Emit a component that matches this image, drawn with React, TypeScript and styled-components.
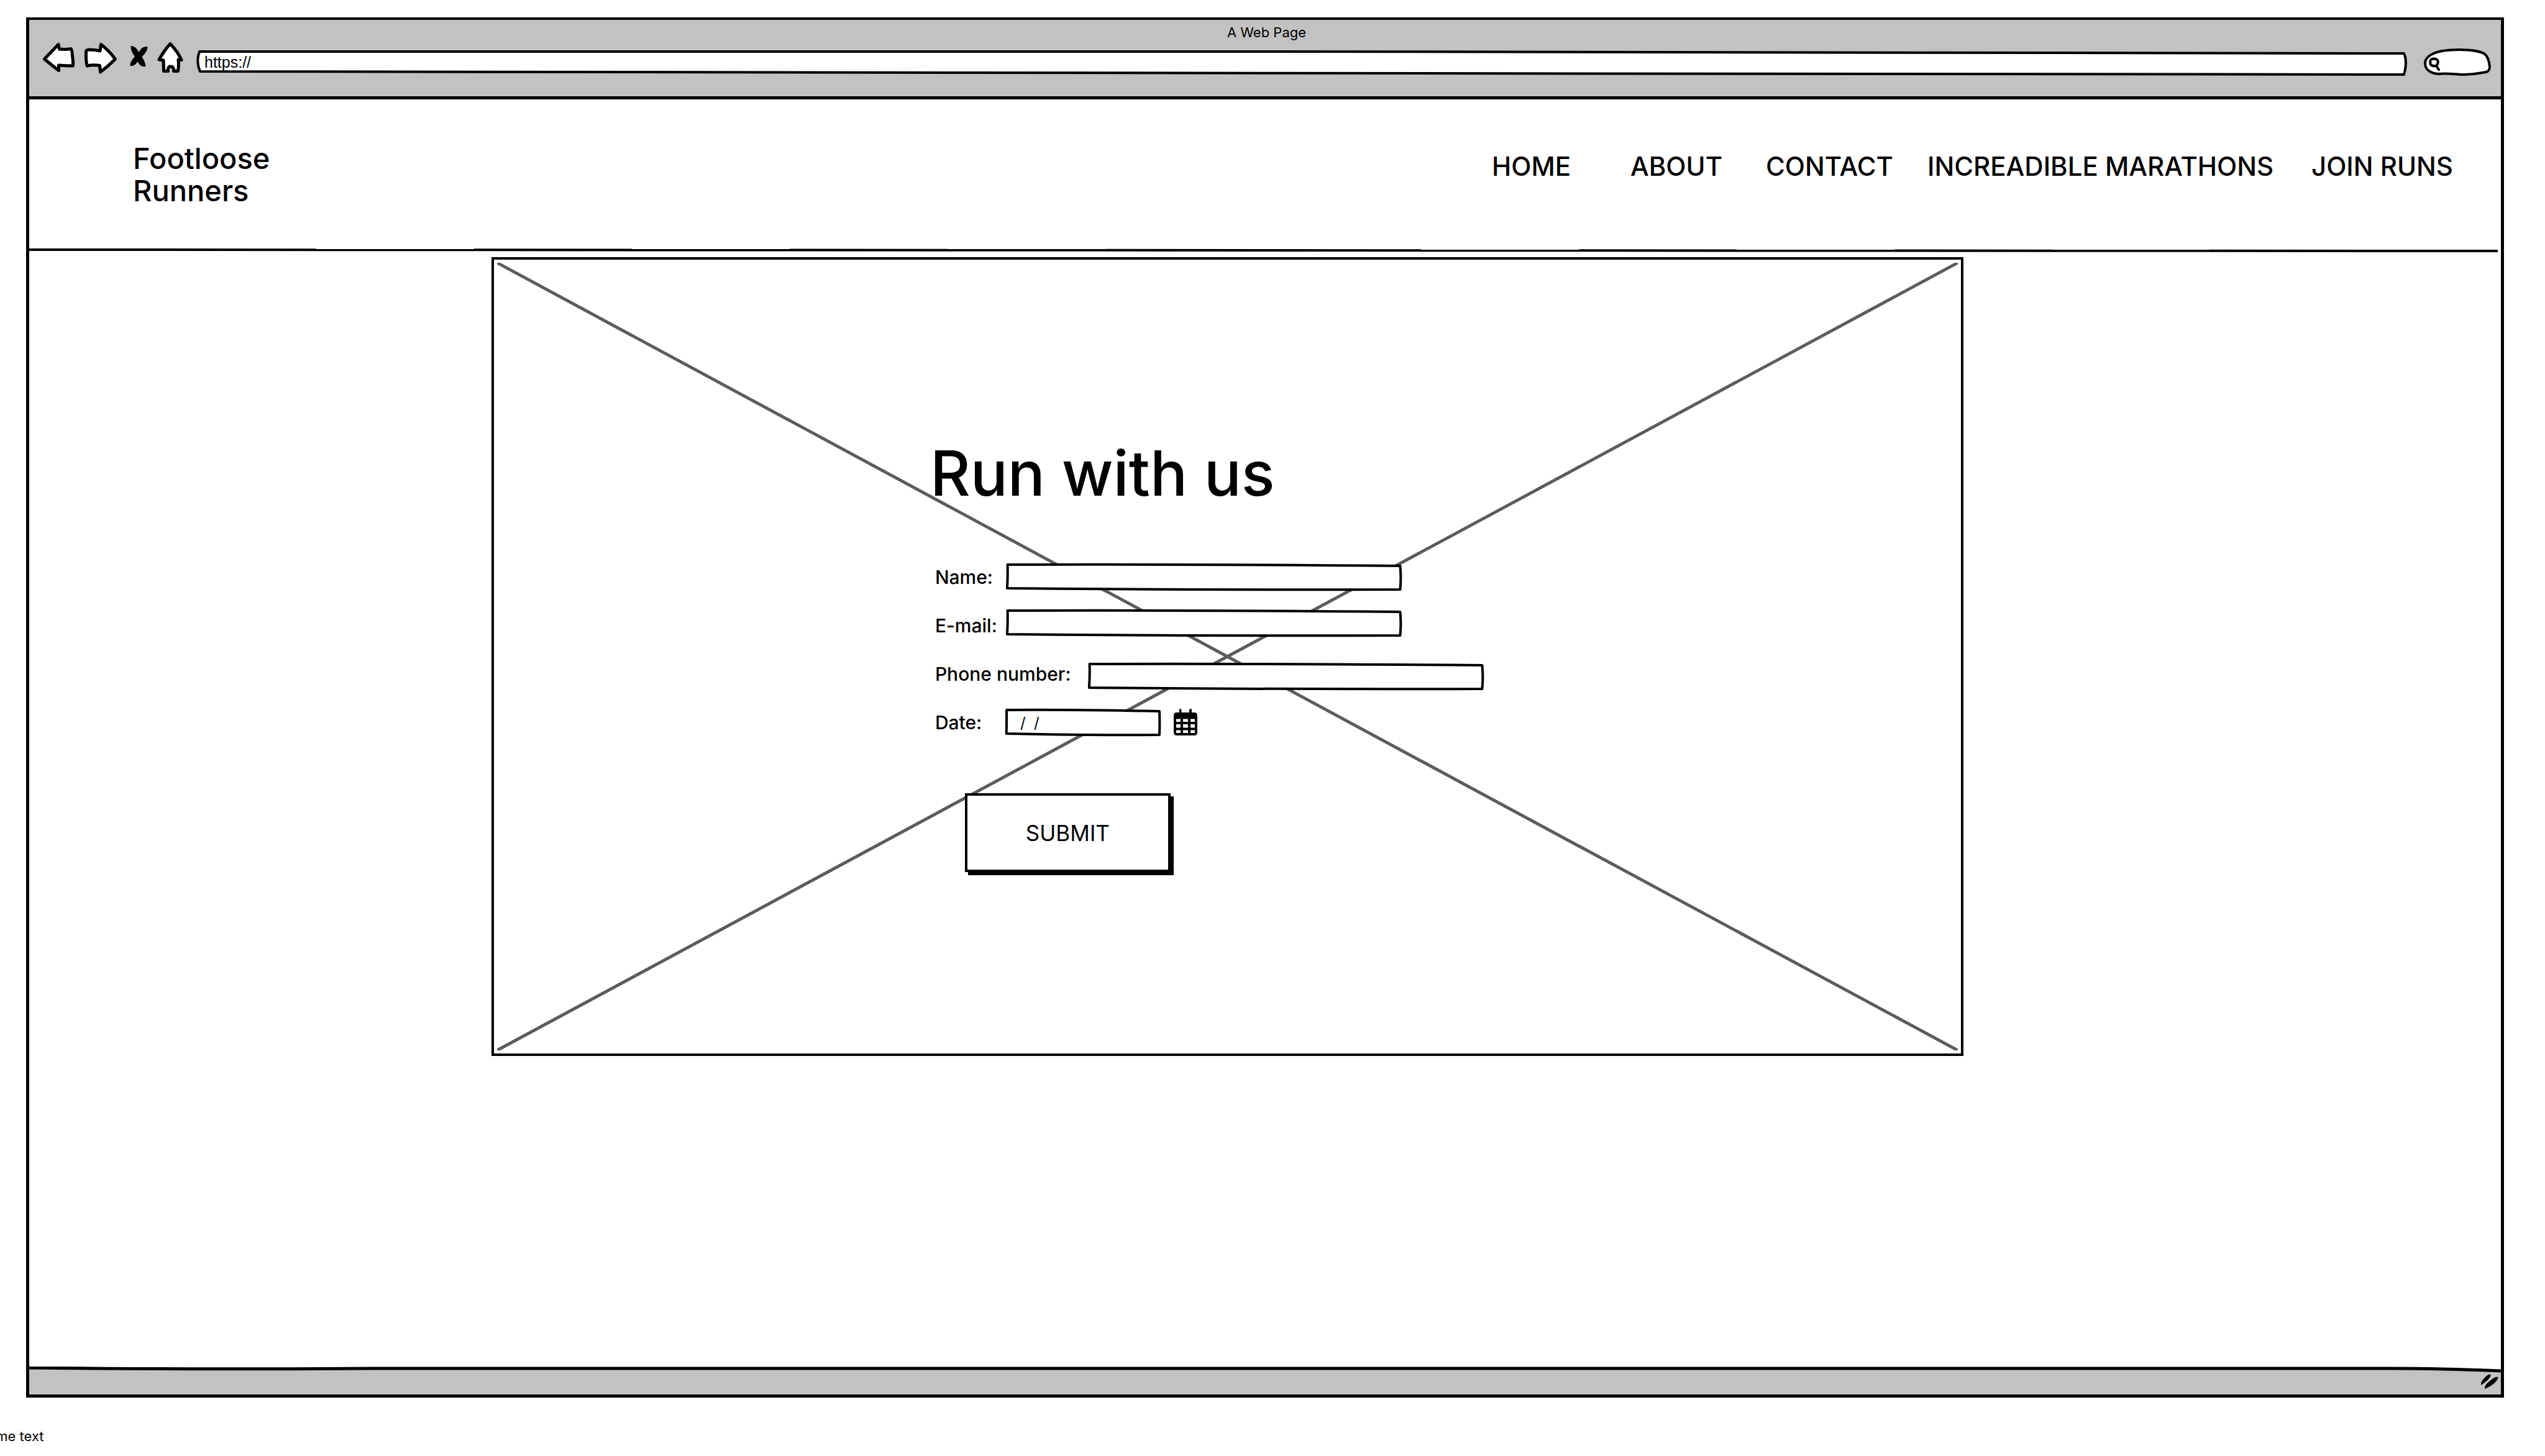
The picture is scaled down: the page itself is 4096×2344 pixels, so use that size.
import React from "react";
import styled, { createGlobalStyle } from "styled-components";

const ink = "#000000";
const chrome = "#c2c2c2";
const crossLine = "#5c5c5e";
const sans = `Inter, "Liberation Sans", sans-serif`;

const GlobalStyle = createGlobalStyle`
  *, *::before, *::after { box-sizing: border-box; }
  body {
    margin: 0;
    background: #ffffff;
    color: ${ink};
    font-family: ${sans};
    overflow-x: hidden;
  }
  button, input { font: inherit; color: inherit; }
`;

const Page = styled.div`
  display: flex;
  flex-direction: column;
  min-height: 100vh;
  padding-top: 28px;
`;

const BrowserFrame = styled.div`
  flex: 1;
  display: flex;
  flex-direction: column;
  margin: 0 66px 0 42px;
  border: solid ${ink};
  border-width: 4px 5px 5px;
`;

const Toolbar = styled.div`
  padding: 6px 16px 33px 21px;
  background: ${chrome};
  border-bottom: 5px solid ${ink};
`;

const WindowTitle = styled.div`
  font-size: 22px;
  line-height: 28px;
  text-align: center;
`;

const ToolbarRow = styled.div`
  display: flex;
  align-items: flex-end;
  gap: 26px;
`;

const HistoryButtons = styled.div`
  display: flex;
  flex: 1;
  align-items: flex-end;
  gap: 14px;
`;

const IconButton = styled.button`
  display: block;
  flex: none;
  padding: 0;
  border: 0;
  background: none;
  cursor: pointer;

  svg { display: block; }
`;

const Sketched = styled.div<{ $width?: string; $height: number; $indent?: number }>`
  position: relative;
  flex: ${p => (p.$width ? "none" : "1")};
  width: ${p => p.$width ?? "auto"};
  height: ${p => p.$height}px;
  margin-left: ${p => p.$indent ?? 0}px;
`;

const Outline = styled.svg`
  position: absolute;
  inset: 0;
  width: 100%;
  height: 100%;
  overflow: visible;

  path {
    fill: #ffffff;
    stroke: ${ink};
    stroke-width: 4px;
    stroke-linejoin: round;
    vector-effect: non-scaling-stroke;
  }
`;

const BareInput = styled.input<{ $size: number; $pad: number }>`
  position: relative;
  display: block;
  width: 100%;
  height: 100%;
  padding: 0 ${p => p.$pad}px;
  border: 0;
  outline: 0;
  background: transparent;
  font-size: ${p => p.$size}px;
`;

const AddressInput = styled(BareInput)`
  padding-bottom: 3px;
  font-family: "Liberation Sans", Arial, sans-serif;
`;

const Magnifier = styled.svg`
  position: absolute;
  left: 8px;
  top: 14px;
`;

const SiteHeader = styled.header`
  display: flex;
  justify-content: space-between;
  align-items: flex-start;
  padding: 69px 69px 65px 167px;
`;

const Brand = styled.div`
  width: min-content;
  font-size: 47px;
  font-weight: 500;
  line-height: 52px;
`;

const Nav = styled.nav`
  display: grid;
  grid-template-columns: 223px 218px 260px 618px 236px;
  padding-top: 13px;
`;

const NavLink = styled.a`
  color: inherit;
  font-size: 42px;
  font-weight: 500;
  line-height: 52px;
  text-decoration: none;
  white-space: nowrap;
`;

const Divider = styled.svg`
  display: block;
  width: calc(100% - 5px);
  height: 8px;
`;

const Hero = styled.section`
  position: relative;
  width: 59.55%;
  aspect-ratio: 2369 / 1286;
  margin: 8px 0 0 18.7%;
  padding: 284px 0 0 702px;
  border: 4px solid ${ink};
`;

const Cross = styled.svg`
  position: absolute;
  inset: 0;
  width: 100%;
  height: 100%;
  padding: 5px;
`;

const HeroTitle = styled.h1`
  position: relative;
  margin: 0 0 85px;
  font-size: 100px;
  font-weight: 500;
  line-height: 120px;
`;

const Form = styled.form`
  position: relative;
  display: flex;
  flex-direction: column;
  gap: 42px;
  padding-left: 8px;
`;

const FieldPair = styled.div`
  display: flex;
  flex-direction: column;
  gap: 30px;
`;

const FieldRow = styled.div<{ $align?: string }>`
  display: flex;
  align-items: ${p => p.$align ?? "center"};
`;

const Label = styled.label<{ $wide?: boolean }>`
  flex: none;
  width: ${p => (p.$wide ? 246 : 114)}px;
  font-size: 30px;
  font-weight: 500;
  line-height: 36px;
  white-space: nowrap;
`;

const CalendarButton = styled(IconButton)`
  margin-left: 22px;
`;

const SubmitButton = styled.button`
  align-self: flex-start;
  width: 331px;
  height: 127px;
  margin: 50px 0 0 48px;
  border: 4px solid ${ink};
  background: #ffffff;
  box-shadow: 5px 5px 0 ${ink};
  font-size: 35px;
  cursor: pointer;
`;

const Main = styled.main`
  flex: 1;
`;

const StatusBar = styled.footer`
  position: relative;
  display: flex;
  justify-content: flex-end;
  align-items: center;
  height: 45px;
  padding: 4px 3px 0 0;
`;

const StatusShape = styled(Outline)`
  overflow: hidden;

  path:first-child { fill: ${chrome}; stroke: none; }
  path:last-child { fill: none; stroke-width: 5px; }
`;

const Grip = styled.svg`
  position: relative;
`;

const Caption = styled.p`
  margin: 0;
  padding: 48px 0 18px;
  font-size: 22px;
  line-height: 28px;
  text-indent: -34px;
  white-space: nowrap;
`;

const arrowStroke = {
  fill: "#ffffff",
  stroke: ink,
  strokeWidth: 5,
  strokeLinejoin: "round" as const,
  strokeLinecap: "round" as const,
};

const links = ["HOME", "ABOUT", "CONTACT", "INCREADIBLE MARATHONS", "JOIN RUNS"];

function FieldBox({ id, type, width, value }: { id: string; type: string; width: string; value?: string }) {
  return (
    <Sketched $width={width} $height={44}>
      <Outline viewBox="0 0 1000 44" preserveAspectRatio="none" aria-hidden="true">
        <path d="M4 2 Q400 1 996 4 Q999 22 996 42 Q500 43 3 40 Q5 20 4 2Z" />
      </Outline>
      <BareInput id={id} name={id} type={type} defaultValue={value} $size={24} $pad={23} />
    </Sketched>
  );
}

export default function App() {
  return (
    <>
      <GlobalStyle />
      <Page>
        <BrowserFrame>
          <Toolbar>
            <WindowTitle>A Web Page</WindowTitle>
            <ToolbarRow>
              <HistoryButtons>
                <IconButton type="button" aria-label="Back">
                  <svg width="53" height="56" viewBox="0 0 53 56">
                    <path {...arrowStroke} d="M3.500 29 L26 5.500 L27.500 13 Q37 14 46 12.500 Q48 13 48.500 24 Q50 32 49.500 40 Q38 40 26.500 39 L26.500 47.500 Q14 38 3.500 29Z" />
                  </svg>
                </IconButton>
                <IconButton type="button" aria-label="Forward">
                  <svg width="54" height="56" viewBox="0 0 54 56">
                    <path {...arrowStroke} d="M3.500 17 Q4 14 9 14 Q18 14 26 16 L27.500 5.500 Q40 15 50.500 29 Q39 41 26.500 50 L25.500 39.500 Q15 38 5 40 Q3 30 3.500 17Z" />
                  </svg>
                </IconButton>
                <IconButton type="button" aria-label="Stop">
                  <svg width="36" height="56" viewBox="0 0 36 56">
                    <path fill={ink} d="M7.500 8 Q15 7 20.500 18 Q25 8 34.500 9 Q35 16 25.500 25.500 Q31 34 31.500 41 Q23 43 18.500 33 Q14 41 6.500 40 Q6 33 14 25 Q7 16 7.500 8Z" />
                  </svg>
                </IconButton>
                <IconButton type="button" aria-label="Home">
                  <svg width="42" height="56" viewBox="0 0 42 56">
                    <path {...arrowStroke} d="M21 4.500 Q33 17 39 30.500 L34 30 Q35 40 33.500 48.500 L26.500 48.500 Q27 41 21.500 41 Q17 41 17.500 48.500 L10.500 48.500 L10 31 L3 30 Q12 14 21 4.500Z" />
                  </svg>
                </IconButton>
                <Sketched $height={41} $indent={7}>
                  <Outline viewBox="0 0 3560 41" preserveAspectRatio="none" aria-hidden="true">
                    <path d="M5 2 C1000 1 2600 2 3554 5 Q3560 18 3554 39 C2600 38 1000 36 6 34 Q-1 18 5 2Z" />
                  </Outline>
                  <AddressInput aria-label="Address" defaultValue="https://" $size={25} $pad={13} />
                </Sketched>
              </HistoryButtons>
              <Sketched $width="108px" $height={44}>
                <Outline viewBox="0 0 108 44" aria-hidden="true">
                  <path d="M24 41 C12 40 2 35 2 24 C2 12 18 2 56 2 C76 2 92 5 98 9 C103 13 105 20 106 29 C106 35 104 37 100 38 C88 40 82 42 66 42 C52 42 36 39 24 41Z" />
                </Outline>
                <BareInput aria-label="Search" type="search" $size={24} $pad={28} />
                <Magnifier width="20" height="22" viewBox="0 0 20 22" fill="none" stroke={ink} strokeWidth="4" strokeLinecap="round">
                  <path d="M12 14 Q6 15 3 12 Q0 3 8 2.500 Q17 3 14 11 Q13 13 12 14 L16 20" />
                </Magnifier>
              </Sketched>
            </ToolbarRow>
          </Toolbar>

          <Main>
            <SiteHeader>
              <Brand>Footloose Runners</Brand>
              <Nav>
                {links.map(link => (
                  <NavLink key={link} href="#">{link}</NavLink>
                ))}
              </Nav>
            </SiteHeader>
            <Divider viewBox="0 0 1000 8" preserveAspectRatio="none" aria-hidden="true">
              <path d="M0 4 L1000 6" fill="none" stroke={ink} strokeWidth="4" vectorEffect="non-scaling-stroke" />
            </Divider>

            <Hero>
              <Cross viewBox="0 0 1000 1000" preserveAspectRatio="none" aria-hidden="true">
                <path d="M0 0 L1000 1000 M1000 0 L0 1000" fill="none" stroke={crossLine} strokeWidth="5" vectorEffect="non-scaling-stroke" />
              </Cross>
              <HeroTitle>Run with us</HeroTitle>
              <Form onSubmit={event => event.preventDefault()}>
                <FieldPair>
                  <FieldRow>
                    <Label htmlFor="name">Name:</Label>
                    <FieldBox id="name" type="text" width="637px" />
                  </FieldRow>
                  <FieldRow $align="flex-end">
                    <Label htmlFor="email">E-mail:</Label>
                    <FieldBox id="email" type="email" width="637px" />
                  </FieldRow>
                </FieldPair>
                <FieldPair>
                  <FieldRow $align="flex-start">
                    <Label htmlFor="phone" $wide>Phone number:</Label>
                    <FieldBox id="phone" type="tel" width="637px" />
                  </FieldRow>
                  <FieldRow>
                    <Label htmlFor="date">Date:</Label>
                    <FieldBox id="date" type="text" width="248px" value="/  /" />
                    <CalendarButton type="button" aria-label="Choose a date">
                      <svg width="38" height="44" viewBox="0 0 38 44">
                        <path
                          fill={ink}
                          fillRule="evenodd"
                          d="M9 6 V2 Q9 0 10.500 0 Q12.500 0 12.500 2 V6 H25 V2 Q25 0 27 0 Q29 0 29 2 V6 H33 Q38 6 38 11 V38 Q38 43 33 43 H5 Q0 43 0 38 V11 Q0 6 5 6Z
                             M4 16.500 V21 H11 V16.500Z M15 16.500 V21 H23 V16.500Z M27 16.500 V21 H34 V16.500Z
                             M4 25 V30.500 H11 V25Z M15 25 V30.500 H23 V25Z M27 25 V30.500 H34 V25Z
                             M4 34.500 V39 H11 V34.500Z M15 34.500 V39 H23 V34.500Z M27 34.500 V39 H34 V34.500Z"
                        />
                      </svg>
                    </CalendarButton>
                  </FieldRow>
                </FieldPair>
                <SubmitButton type="submit">SUBMIT</SubmitButton>
              </Form>
            </Hero>
          </Main>

          <StatusBar>
            <StatusShape viewBox="0 0 1000 45" preserveAspectRatio="none" aria-hidden="true">
              <path d="M0 2 Q60 5 140 3 L955 3 Q975 3 1000 7 V45 H0Z" />
              <path d="M0 2 Q60 5 140 3 L955 3 Q975 3 1000 7" />
            </StatusShape>
            <Grip width="30" height="25" viewBox="0 0 30 25" aria-hidden="true">
              <path fill={ink} d="M1 18 Q0 13 6 7 Q11 1 15 0.500 Q18 1 15 6 Q10 12 1 18Z M7 24 Q6 19 13 13 Q22 5 26 4.500 Q30 5 28 8 Q22 18 7 24Z" />
            </Grip>
          </StatusBar>
        </BrowserFrame>
        <Caption>Some text</Caption>
      </Page>
    </>
  );
}
